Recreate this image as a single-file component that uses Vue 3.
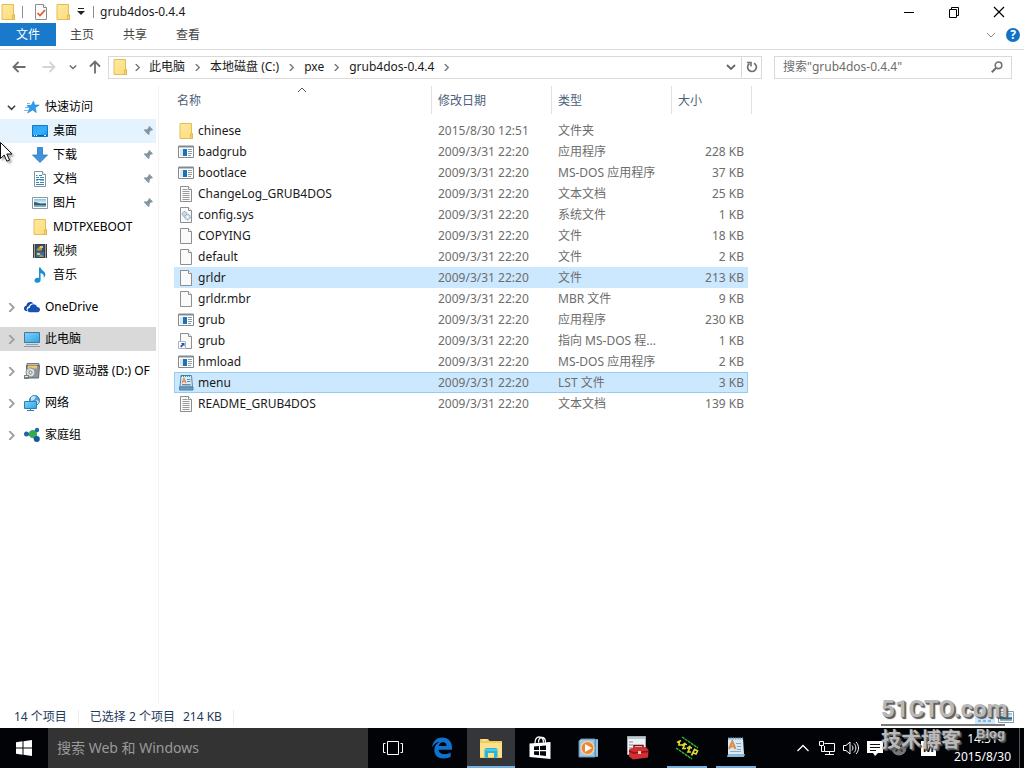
<script setup>
import { ref } from 'vue'

const crumbs = ['此电脑', '本地磁盘 (C:)', 'pxe', 'grub4dos-0.4.4']
const tabs = ['主页', '共享', '查看']
const query = ref('')
const webQuery = ref('')

const quickItems = [
  { name: '桌面', icon: 'desktop', pinned: true, hover: true },
  { name: '下载', icon: 'download', pinned: true },
  { name: '文档', icon: 'document', pinned: true },
  { name: '图片', icon: 'picture', pinned: true },
  { name: 'MDTPXEBOOT', icon: 'folder' },
  { name: '视频', icon: 'video' },
  { name: '音乐', icon: 'music' }
]
const roots = [
  { name: 'OneDrive', icon: 'onedrive' },
  { name: '此电脑', icon: 'pc', current: true },
  { name: 'DVD 驱动器 (D:) OF', icon: 'dvd' },
  { name: '网络', icon: 'network' },
  { name: '家庭组', icon: 'homegroup' }
]

const stamp = '2009/3/31 22:20'
const files = [
  { name: 'chinese', icon: 'folder', date: '2015/8/30 12:51', type: '文件夹', size: '' },
  { name: 'badgrub', icon: 'app', date: stamp, type: '应用程序', size: '228 KB' },
  { name: 'bootlace', icon: 'app', date: stamp, type: 'MS-DOS 应用程序', size: '37 KB' },
  { name: 'ChangeLog_GRUB4DOS', icon: 'text', date: stamp, type: '文本文档', size: '25 KB' },
  { name: 'config.sys', icon: 'sys', date: stamp, type: '系统文件', size: '1 KB' },
  { name: 'COPYING', icon: 'file', date: stamp, type: '文件', size: '18 KB' },
  { name: 'default', icon: 'file', date: stamp, type: '文件', size: '2 KB' },
  { name: 'grldr', icon: 'file', date: stamp, type: '文件', size: '213 KB', selected: true },
  { name: 'grldr.mbr', icon: 'file', date: stamp, type: 'MBR 文件', size: '9 KB' },
  { name: 'grub', icon: 'app', date: stamp, type: '应用程序', size: '230 KB' },
  { name: 'grub', icon: 'link', date: stamp, type: '指向 MS-DOS 程...', size: '1 KB' },
  { name: 'hmload', icon: 'app', date: stamp, type: 'MS-DOS 应用程序', size: '2 KB' },
  { name: 'menu', icon: 'wordpad', date: stamp, type: 'LST 文件', size: '3 KB', selected: true, focused: true },
  { name: 'README_GRUB4DOS', icon: 'text', date: stamp, type: '文本文档', size: '139 KB' }
]

const apps = [
  { label: '任务视图', icon: 'taskview' },
  { label: 'Microsoft Edge', icon: 'edge' },
  { label: '文件资源管理器', icon: 'explorer', active: true },
  { label: '应用商店', icon: 'store' },
  { label: 'Windows Media Player', icon: 'player' },
  { label: '工具箱', icon: 'toolbox' },
  { label: 'Tftpd', icon: 'tftp', running: true },
  { label: '写字板', icon: 'pad', running: true }
]
</script>

<template>
  <div class="screen">
    <svg class="sprite" aria-hidden="true">
      <defs>
        <linearGradient id="g-folder" x1="0" y1="0" x2="1" y2="1"><stop offset="0" stop-color="#ffe9a2" /><stop offset="1" stop-color="#fbdc7b" /></linearGradient>
        <linearGradient id="g-screen" x1="0" y1="0" x2="1" y2="1"><stop offset="0" stop-color="#2fa6f5" /><stop offset=".6" stop-color="#34b0fb" /><stop offset="1" stop-color="#0f8ff0" /></linearGradient>
        <linearGradient id="g-pc" x1="0" y1="0" x2="1" y2="1"><stop offset="0" stop-color="#7fd3fb" /><stop offset="1" stop-color="#2ea3e6" /></linearGradient>
        <linearGradient id="g-pic" x1="0" y1="0" x2="0" y2="1"><stop offset="0" stop-color="#7fc4ea" /><stop offset=".5" stop-color="#e9f5f8" /><stop offset=".6" stop-color="#40758a" /><stop offset="1" stop-color="#8fc3d6" /></linearGradient>
      </defs>
      <symbol id="i-folder" viewBox="0 0 16 16">
        <path d="M2 .5h11.5v10h1v5H2z" fill="url(#g-folder)" stroke="#e3bd57" stroke-width="1" />
        <path d="M12.500 15.500v-4.500h2v4.500z" fill="#f7d36c" stroke="#dcb44c" stroke-width=".8" />
      </symbol>
      <symbol id="i-file" viewBox="0 0 16 16">
        <path d="M2.500 .5h8l3 3v12h-11z" fill="#fafafa" stroke="#8e8e8e" />
        <path d="M10.500 .5v3h3" fill="#fff" stroke="#8e8e8e" />
      </symbol>
      <symbol id="i-text" viewBox="0 0 16 16">
        <use href="#i-file" /><path d="M4.500 3.500h5M4.500 5.500h7M4.500 7.500h7M4.500 9.500h7M4.500 11.500h7M4.500 13.500h7" stroke="#9a9a9a" />
      </symbol>
      <symbol id="i-sys" viewBox="0 0 16 16">
        <use href="#i-file" />
        <circle cx="6.500" cy="7" r="2.300" fill="#cfdce6" stroke="#7c8d9b" stroke-dasharray="1.200 .6" />
        <circle cx="9.500" cy="10" r="2.700" fill="#cfe2f2" stroke="#6a93b5" stroke-dasharray="1.200 .6" />
        <circle cx="9.500" cy="10" r=".9" fill="#fff" />
      </symbol>
      <symbol id="i-app" viewBox="0 0 16 16">
        <path d="M.5 2.500h15v11H.5z" fill="#fff" stroke="#848b90" />
        <path d="M.5 2.500h15" stroke="#848b90" stroke-width="2" />
        <path d="M2 5h3v7H2z" fill="#e0e7ec" /><path d="M5 5h4v7H5z" fill="#1874b8" />
        <path d="M10 5.500h4M10 7.500h4M10 9.500h4M10 11.500h3" stroke="#8e9aa3" />
      </symbol>
      <symbol id="i-link" viewBox="0 0 16 16">
        <use href="#i-file" /><path d="M.5 8.500h7v7h-7z" fill="#fff" stroke="#a9b4bd" />
        <path d="M3 10h3.500v3.500L5.300 12.300 3.500 14.500 2 13.300l2.100-2.100z" fill="#1e56a8" />
      </symbol>
      <symbol id="i-wordpad" viewBox="0 0 16 16">
        <path d="M3 .5h10.500l1 11.500H2z" fill="#d9ecf8" stroke="#4f88ae" />
        <path d="M3 1h10" stroke="#2b6896" stroke-dasharray="1 1" stroke-width="1.400" />
        <path d="M1.500 12h13.500v3H1.500z" fill="#6ba0c4" stroke="#4b82a6" />
        <path d="M4 8l2-4.500L8 8M4.700 6.500h2.600" fill="none" stroke="#e98743" stroke-width="1.200" />
        <path d="M9 4.500h3.500M9 6.500h3.500M4 9.500h8.500M4 11h9" stroke="#6d8da5" />
      </symbol>
      <symbol id="i-star" viewBox="0 0 16 16">
        <path d="M9.500 2l1 4 4.700.1-4 2.700 1.200 4.800-3.900-2.700-4.800 3.200 1.900-4.800L3 6.600l4.300-.3z" fill="#2e9df0" stroke="#1f7fce" stroke-width=".6" />
        <path d="M1 8.500h3.500M0 11.500h4M3 4.500h3" stroke="#65b5f0" stroke-width=".9" />
      </symbol>
      <symbol id="i-desktop" viewBox="0 0 16 16">
        <path d="M.5 2.500h15v11H.5z" fill="url(#g-screen)" stroke="#1179c9" />
        <path d="M1 12.500h14" stroke="#0c5ea8" /><path d="M2 12.500h1M4 12.500h1M12 12.500h2" stroke="#dff1ff" />
      </symbol>
      <symbol id="i-download" viewBox="0 0 16 16">
        <path d="M5.500 .5h5V8h5L8 15.500.5 8h5z" fill="#3d93dc" stroke="#2878c0" stroke-width=".8" />
      </symbol>
      <symbol id="i-document" viewBox="0 0 16 16">
        <path d="M2.500 .5h8l3 3v12h-11z" fill="#fff" stroke="#87929a" /><path d="M10.500 .5v3h3" fill="#fff" stroke="#87929a" />
        <path d="M4 4.500h1.500M7 4.500h3M4 6.500h3M8 6.500h4M4 8.500h8M4 11.500h3M8 11.500h4M4 13.500h8" stroke="#3586b8" />
        <path d="M8 9.500h4M4 9.500h2" stroke="#7db8d6" />
      </symbol>
      <symbol id="i-picture" viewBox="0 0 16 16">
        <path d="M.5 2.500h15v11H.5z" fill="#fff" stroke="#8c989f" /><path d="M2 4h12v8H2z" fill="url(#g-pic)" />
        <path d="M2 7c3 0 5 1.500 7 2l5-.5V10H2z" fill="#32606f" />
      </symbol>
      <symbol id="i-video" viewBox="0 0 16 16">
        <path d="M1 1h14v14H1z" fill="#3d3f44" /><path d="M4 2h8v5.500H4z" fill="#2d4f83" /><path d="M4 8.500h8V14H4z" fill="#3a6aa5" />
        <path d="M6 7.500V5l2-2 2 2v2.500z" fill="#d8902e" /><path d="M4 7.500l2-3 2 3zM7 14l2-3 3 3z" fill="#84a94a" /><path d="M8 3h3v2H8zM5 10h3v2H5z" fill="#e3c85c" />
        <path d="M2.500 1.500v14M13.500 1.500v14" stroke="#fff" stroke-dasharray="1 1" />
      </symbol>
      <symbol id="i-music" viewBox="0 0 16 16">
        <path d="M7 .5h1.600c.3 2.600 4.700 3.500 4.700 7 0 1.600-.9 2.900-1.600 3.500.6-2.500-.5-4.300-3.100-5v7.200c0 1.400-1.200 2.500-3.100 2.500-1.800 0-3-.9-3-2.300 0-1.600 1.500-2.600 3.200-2.600.5 0 .9.100 1.300.200z" fill="#1c8fd3" />
      </symbol>
      <symbol id="i-onedrive" viewBox="0 0 16 16">
        <path d="M3.300 12.300C1.300 12.300 0 11.200 0 9.500c0-1.500 1-2.500 2.400-2.700C2.500 4.500 4.300 3 6.300 3c1.500 0 2.600.7 3.300 1.700-2.300-.7-4.100.6-4.600 2.500C3.300 7.600 2.400 9 2.700 10.700c.1.600.3 1.100.6 1.600z" fill="#0f4aa8" />
        <path d="M6 13.300c-1.500 0-2.500-.9-2.500-2.200s1-2.300 2.300-2.400C6 6.600 7.500 5.300 9.500 5.300c1.800 0 3.100 1 3.500 2.600 1.800 0 3 1.100 3 2.700 0 1.500-1.100 2.700-2.600 2.700z" fill="#1553b5" />
      </symbol>
      <symbol id="i-pc" viewBox="0 0 16 16">
        <path d="M.5 1.500h15v10H.5z" fill="url(#g-pc)" stroke="#45779a" /><path d="M2 13.500h12" stroke="#7ba5c0" /><path d="M0 15.500h16" stroke="#8b98a1" />
      </symbol>
      <symbol id="i-dvd" viewBox="0 0 16 16">
        <path d="M3 .5h12v2H3z" fill="#b5bac0" stroke="#77797c" /><path d="M2.500 2.500h13l-1 12.500h-12z" fill="#8d969f" stroke="#5f666d" /><path d="M4 2.500h9v3H4z" fill="#f3c568" />
        <circle cx="6.500" cy="9.500" r="4.500" fill="#dce0e2" stroke="#888" /><path d="M6.500 9.500L3 6.500a5 5 0 013-1.500z" fill="#b7d7c0" /><circle cx="6.500" cy="9.500" r="1.500" fill="#fff" stroke="#777" />
        <path d="M0 12h5v4H0z" fill="#77827c" /><path d="M1 13.500h3" stroke="#eee" />
      </symbol>
      <symbol id="i-network" viewBox="0 0 16 16">
        <circle cx="10.500" cy="5.500" r="5" fill="#4aa5dc" stroke="#317eb0" /><path d="M7 2c2-1.500 4-1.500 5 0l-2 3-3 1zM12 5l3 1-1 3-2 0z" fill="#bee4f5" />
        <path d="M.5 6.500h12v7H.5z" fill="url(#g-pc)" stroke="#2c80b4" /><path d="M3 15.500h7M6.500 14v1" stroke="#3a7ca4" />
      </symbol>
      <symbol id="i-homegroup" viewBox="0 0 16 16">
        <path d="M3 6.500L9 7l3-5v11z" fill="#88bfe2" stroke="#4d97c7" /><circle cx="2.500" cy="7" r="2.500" fill="#2364ae" /><circle cx="9" cy="7" r="4" fill="#37ac4e" /><circle cx="13" cy="3" r="2.200" fill="#1f6aac" /><circle cx="12.800" cy="12" r="3" fill="#19559a" />
      </symbol>
      <symbol id="i-pin" viewBox="0 0 12 12">
        <path d="M7.300 1L11 4.700l-1 .8-.7-.2-1.800 1.800.1 2.200-.9.800-2.400-2.400L1 11l3.200-3.500-2.400-2.300.9-.9 2.100.1 1.900-1.800-.3-.7z" fill="#8494a0" />
      </symbol>
      <symbol id="i-chev" viewBox="0 0 8 8"><path d="M2 0l4 4-4 4" fill="none" stroke="currentColor" stroke-width="1.600" /></symbol>
      <symbol id="i-down" viewBox="0 0 10 10"><path d="M1 3l4 4 4-4" fill="none" stroke="currentColor" stroke-width="1.800" /></symbol>
      <symbol id="i-left" viewBox="0 0 14 14"><path d="M13.500 7H1.500M6.500 2l-5 5 5 5" fill="none" stroke="currentColor" stroke-width="1.800" /></symbol>
      <symbol id="i-right" viewBox="0 0 14 14"><path d="M.5 7h12M7.500 2l5 5-5 5" fill="none" stroke="currentColor" stroke-width="1.800" /></symbol>
      <symbol id="i-up" viewBox="0 0 14 14"><path d="M7 13.500V1.500M2 6.500l5-5 5 5" fill="none" stroke="currentColor" stroke-width="1.800" /></symbol>

      <symbol id="i-taskview" viewBox="0 0 24 24"><path d="M6.500 5.500h11v13h-11zM4.500 7.500h-2v9h2M19.500 7.500h2v9h-2" fill="none" stroke="#fff" /></symbol>
      <symbol id="i-edge" viewBox="0 0 24 24">
        <path d="M2 11.500C3 4.700 7.200 1.500 12.300 1.500c5.800 0 9.700 4 9.700 10v2.300H8.700c.2 3 2.600 4.400 5.800 4.400 2.400 0 4.300-.6 6.200-1.700v4.300c-1.800 1.100-4.200 1.700-7.100 1.700-5.700 0-9.300-3.300-9.300-8.500 0-3.900 2.200-6.600 5.300-8.300C5.700 6.600 3.600 8.500 2 11.500zM8.800 10h7.700c0-2.300-1.200-3.700-3.500-3.700-2.200 0-3.800 1.500-4.200 3.700z" fill="#0f72cf" />
      </symbol>
      <symbol id="i-explorer" viewBox="0 0 24 24">
        <path d="M1 3h8l1.500 2H23v17H1z" fill="#f2cb60" /><path d="M1 7h22v14H1z" fill="#fde18a" /><path d="M3 4h5" stroke="#fff3c4" />
        <path d="M5.500 21v-7c0-1.200.8-2 2-2h9c1.200 0 2 .8 2 2v7l-3.500 1.500V17H9v5.500z" fill="#28b5dc" /><path d="M6 14h12" stroke="#6fd7ee" />
      </symbol>
      <symbol id="i-store" viewBox="0 0 24 24">
        <path d="M7 7.500C7 3 8.500 1 11 1s4.500 2 4.500 5.500M10.500 6.500C10.500 3 12 1.500 14 1.500c2.200 0 3.500 2 3.500 5" fill="none" stroke="#fff" stroke-width="1.300" />
        <path d="M1.500 7.500L22.500 6v17l-21-2z" fill="#fff" /><path d="M6 10.500l5-.4v4H6zM12 10l6-.5v4.600h-6zM6 15.200h5v4l-5-.5zM12 15.200h6v4.700l-6-.6z" fill="#05070a" />
      </symbol>
      <symbol id="i-player" viewBox="0 0 24 24">
        <path d="M6 3h15v18H6z" fill="#5a9fc9" /><path d="M4 3h14v18H2V5z" fill="#9cc9e4" stroke="#5c8fae" /><path d="M20 4v16" stroke="#c8e3f2" />
        <circle cx="10.500" cy="12" r="6.500" fill="#ed8730" stroke="#f9d5b0" stroke-width="1.200" /><path d="M8 8l7 4-7 4z" fill="#fff" />
      </symbol>
      <symbol id="i-toolbox" viewBox="0 0 24 24">
        <path d="M1.500 .5h18v18h-18z" fill="#f0f3f5" stroke="#a0adb6" /><path d="M2 1h17v2H2z" fill="#bbc8d0" /><path d="M3 6h4M3 9h4M3 12h3" stroke="#7b8b96" />
        <path d="M8 12V9.500h9V12" fill="none" stroke="#6b1517" stroke-width="1.500" /><path d="M3 13.500L8 11h12l2.500 3-.5 7.500L7 23.500l-4-3z" fill="#d12f31" /><path d="M3 15l5 2 14-1.500" stroke="#8c1519" stroke-width="1.500" fill="none" /><path d="M12 15h3v3h-3z" fill="#f3c5be" />
      </symbol>
      <symbol id="i-tftp" viewBox="0 0 24 24">
        <path d="M7 1l16 11M1 12l16 11" stroke="#24bb37" stroke-width="1.400" stroke-dasharray="3 .6" />
        <path d="M2 6.500l4-2M4.500 5l-.5 4h3M7 9.500l3.500-2.500M9 8l3 .5M9.500 8.500l-1.500 4h3M12 12.500l3.500-2.500M14 11l3 1M15 11.500l-2 4.500h3M16.500 19.500l3-6 3 1.500-1.500 3-3-1" fill="none" stroke="#ddd832" stroke-width="1.700" />
      </symbol>
      <symbol id="i-pad" viewBox="0 0 24 24">
        <path d="M4 2h15l1 16H4z" fill="#d5e9f6" /><path d="M4 2.500h15" stroke="#77a9cc" stroke-width="2" stroke-dasharray="1.500 .8" /><path d="M4 18h17l-1 3H3z" fill="#8fb6d2" />
        <path d="M5 13l3.300-7.500L11.500 13M6.300 10.500h4" fill="none" stroke="#e28a49" stroke-width="2" /><path d="M12 7.500h5M13 10.500h4M13 13.500h4M6 15.500h11" stroke="#8ea8bb" />
      </symbol>
    </svg>

    <main class="window">
      <header class="titlebar">
        <svg class="ic16"><use href="#i-folder" /></svg>
        <i class="vsep"></i>
        <svg class="ic16" viewBox="0 0 16 16"><use href="#i-file" /><path d="M4.500 9l2.500 2.500L12 6" fill="none" stroke="#e2582f" stroke-width="1.700" /></svg>
        <svg class="ic16"><use href="#i-folder" /></svg>
        <button class="plain quick-caret" aria-label="自定义快速访问工具栏"><svg class="ic8" viewBox="0 0 8 8"><path d="M1 .5h6" stroke="#222" /><path d="M0 3h8L4 7z" fill="#222" /></svg></button>
        <i class="vsep"></i>
        <h1 class="title">grub4dos-0.4.4</h1>
        <div class="wincontrols">
          <button class="plain" aria-label="最小化"><svg viewBox="0 0 12 12"><path d="M1 6.500h10" stroke="#000" /></svg></button>
          <button class="plain" aria-label="还原"><svg viewBox="0 0 12 12"><path d="M1.500 3.500h7v8h-7zM3.500 3V1.500h7v8H9" fill="none" stroke="#000" /></svg></button>
          <button class="plain" aria-label="关闭"><svg viewBox="0 0 12 12"><path d="M1 1l10 10M11 1L1 11" stroke="#000" stroke-width="1.200" /></svg></button>
        </div>
      </header>

      <nav class="ribbon">
        <button class="tab file-tab">文件</button>
        <button v-for="t in tabs" :key="t" class="tab">{{ t }}</button>
        <button class="plain expand" aria-label="展开功能区"><svg class="ic10" viewBox="0 0 10 10"><path d="M1 3l4 4 4-4" fill="none" stroke="#8a8a8a" /></svg></button>
        <button class="help" aria-label="帮助">?</button>
      </nav>

      <div class="navrow">
        <button class="plain nav-btn" aria-label="后退"><svg class="ic14"><use href="#i-left" /></svg></button>
        <button class="plain nav-btn off" aria-label="前进"><svg class="ic14"><use href="#i-right" /></svg></button>
        <button class="plain nav-btn small" aria-label="最近位置"><svg class="ic8"><use href="#i-down" /></svg></button>
        <button class="plain nav-btn" aria-label="上移"><svg class="ic14"><use href="#i-up" /></svg></button>
        <div class="address">
          <svg class="ic16"><use href="#i-folder" /></svg>
          <svg class="sep lead"><use href="#i-chev" /></svg>
          <template v-for="c in crumbs" :key="c">
            <a href="#" class="crumb">{{ c }}</a>
            <svg class="sep"><use href="#i-chev" /></svg>
          </template>
          <button class="plain drop" aria-label="以前的位置"><svg class="ic10"><use href="#i-down" /></svg></button>
          <button class="plain refresh" aria-label="刷新"><svg class="ic12" viewBox="0 0 12 12"><path d="M8 2.200A4.400 4.400 0 1 1 3.500 2.500" fill="none" stroke="#707070" stroke-width="1.700" /><path d="M1 1.500h4v4" fill="none" stroke="#707070" stroke-width="1.600" /></svg></button>
        </div>
        <label class="searchbox">
          <input v-model="query" type="text" placeholder='搜索"grub4dos-0.4.4"' aria-label="搜索" />
          <svg class="ic12" viewBox="0 0 12 12"><circle cx="7.500" cy="4.300" r="3.300" fill="none" stroke="#707070" stroke-width="1.600" /><path d="M5 7L.8 11.200" stroke="#707070" stroke-width="2" /></svg>
        </label>
      </div>

      <div class="body">
        <aside class="tree">
          <section>
            <a href="#" class="node"><svg class="twist open"><use href="#i-down" /></svg><svg class="ic16"><use href="#i-star" /></svg><span>快速访问</span></a>
            <a v-for="q in quickItems" :key="q.name" href="#" class="node child" :class="{ hover: q.hover }">
              <svg class="ic16"><use :href="'#i-' + q.icon" /></svg><span>{{ q.name }}</span>
              <svg v-if="q.pinned" class="pin"><use href="#i-pin" /></svg>
            </a>
          </section>
          <a v-for="r in roots" :key="r.name" href="#" class="node" :class="{ current: r.current }">
            <svg class="twist"><use href="#i-chev" /></svg><svg class="ic16"><use :href="'#i-' + r.icon" /></svg><span>{{ r.name }}</span>
          </a>
        </aside>

        <section class="listing">
          <table>
            <colgroup><col class="c-name" /><col class="c-mid" /><col class="c-mid" /><col class="c-size" /><col class="c-end" /></colgroup>
            <thead>
              <tr>
                <th class="first"><div>名称<svg class="sort" viewBox="0 0 10 6"><path d="M1 5l4-4 4 4" fill="none" stroke="#5b5b5b" /></svg></div></th>
                <th><div>修改日期</div></th>
                <th><div>类型</div></th>
                <th colspan="2"><div>大小</div></th>
              </tr>
            </thead>
            <tbody>
              <tr v-for="(f, i) in files" :key="i" :class="{ selected: f.selected, focused: f.focused }">
                <td><span class="fname"><svg class="ic16"><use :href="'#i-' + f.icon" /></svg>{{ f.name }}</span></td>
                <td class="meta">{{ f.date }}</td>
                <td class="meta">{{ f.type }}</td>
                <td class="meta size">{{ f.size }}</td>
              </tr>
            </tbody>
          </table>
        </section>
      </div>

      <footer class="status">
        <span>14 个项目</span><i></i><span>已选择 2 个项目</span><span class="total">214 KB</span><i></i>
        <div class="modes">
          <button class="plain on" aria-label="详细信息"><svg class="ic16" viewBox="0 0 16 16"><path d="M1 4h3M6 4h3M11 4h3M1 8h3M6 8h3M11 8h3M1 12h3M6 12h3M11 12h3" stroke="#567d93" /></svg></button>
          <button class="plain" aria-label="大图标"><svg class="ic16"><use href="#i-picture" /></svg></button>
        </div>
      </footer>
    </main>

    <footer class="taskbar">
      <button class="plain start" aria-label="开始"><svg class="ic16" viewBox="0 0 16 16"><path d="M0 2.300L6.500 1.300v6.200H0zM7.500 1.200L16 0v7.500H7.500zM0 8.500h6.500v6.200L0 13.700zM7.500 8.500H16V16l-8.500-1.200z" fill="#fff" /></svg></button>
      <input v-model="webQuery" class="websearch" type="text" placeholder="搜索 Web 和 Windows" aria-label="搜索 Web 和 Windows" />
      <div class="apps">
        <button v-for="a in apps" :key="a.icon" class="plain app" :class="{ active: a.active, running: a.running }" :aria-label="a.label"><svg class="ic24"><use :href="'#i-' + a.icon" /></svg></button>
      </div>
      <div class="tray">
        <button class="plain" aria-label="显示隐藏的图标"><svg class="ic16" viewBox="0 0 16 16"><path d="M2.500 11L8 5.500 13.500 11" fill="none" stroke="#fff" stroke-width="1.300" /></svg></button>
        <button class="plain" aria-label="网络"><svg class="ic16" viewBox="0 0 16 16"><path d="M5.500 3.500h10v8h-10V6M6 14.500h9M10.500 12v2M.5 1.500h4v4h-4zM2.500 6v5.500h3" fill="none" stroke="#fff" /></svg></button>
        <button class="plain" aria-label="音量"><svg class="ic16" viewBox="0 0 16 16"><path d="M.5 5.500H3l4-3.500v12l-4-3.500H.5zM9 5.500c1.300 1.500 1.300 3.500 0 5M11 3.500c2.500 2.500 2.500 6.500 0 9M13 2c3.300 3.400 3.300 8.600 0 12" fill="none" stroke="#fff" /></svg></button>
        <button class="plain" aria-label="通知"><svg class="ic16" viewBox="0 0 16 16"><path d="M0 1h16v12h-5l-3 3-2-3H0z" fill="#fff" /><path d="M3 4.500h10M3 7.500h10M3 10.500h6" stroke="#111" /></svg></button>
        <button class="plain" aria-label="语言栏"><svg class="ic16" viewBox="0 0 16 16"><circle cx="8" cy="8" r="7.500" fill="#777" /><path d="M4.500 4.500l7 7M11.500 4.500l-7 7" stroke="#222" stroke-width="1.500" /></svg></button>
        <button class="plain ime" aria-label="输入法">M</button>
        <button class="plain clock"><span>14:51</span><span>2015/8/30</span></button>
        <i class="peek"></i>
      </div>
    </footer>

    <div class="watermark">
      <strong>51CTO.com</strong>
      <div><b>技术博客</b><em>Blog</em></div>
    </div>

    <svg class="pointer" viewBox="0 0 13 21"><path d="M.5 .5v16l3.700-3.500 2.600 6.200 2.700-1.200-2.700-6h5.200z" fill="#fff" stroke="#111" /></svg>
  </div>
</template>

<style>
html, body { margin: 0; background: #fff; }
</style>

<style scoped>
.screen {
  position: relative; display: flex; flex-direction: column; height: 100vh; overflow: hidden;
  font: 12px/16px "Noto Sans", "Noto Sans CJK SC", sans-serif; color: #1a1a1a; background: #fff;
}
.screen *, .screen { box-sizing: border-box; }
button, input { font: inherit; color: inherit; }
a { color: inherit; text-decoration: none; }
svg { display: block; flex: none; overflow: visible; }
.sprite { position: absolute; width: 0; height: 0; }
.ic8 { width: 8px; height: 8px; }
.ic10 { width: 10px; height: 10px; }
.ic12 { width: 12px; height: 12px; }
.ic14 { width: 14px; height: 14px; }
.ic16 { width: 16px; height: 16px; }
.ic24 { width: 24px; height: 24px; }
.plain { display: flex; align-items: center; justify-content: center; padding: 0; border: 0; background: none; }
.window { flex: 1; min-height: 0; display: flex; flex-direction: column; }

.titlebar { display: flex; align-items: center; height: 23px; gap: 6px; }
.vsep { width: 1px; height: 12px; background: #8c8c8c; }
.titlebar .vsep + .ic16 { margin-left: 4px; }
.quick-caret { width: 8px; margin-right: 2px; }
.title { margin: 0; font-size: 12px; font-weight: 400; }
.wincontrols { display: flex; margin-left: auto; padding-right: 3px; }
.wincontrols button { width: 45px; height: 20px; }
.wincontrols svg { width: 12px; height: 12px; }

.ribbon { display: flex; align-items: center; height: 27px; padding: 0 4px 3px 0; border-bottom: 1px solid #dadbdc; }
.tab { height: 23px; padding: 1px 15px 0 14px; border: 0; background: none; color: #444; }
.file-tab { padding: 0 16px; background: #1979ca; color: #fff; }
.expand { width: 20px; margin-left: auto; }
.help { width: 14px; height: 14px; margin-left: 5px; padding: 0; border: 0; border-radius: 50%; background: #1173c7; color: #fff; font-weight: 700; line-height: 14px; }

.navrow { display: flex; align-items: center; height: 36px; padding: 0 12px 2px; }
.nav-btn { width: 14px; height: 22px; margin-right: 16px; color: #6d6d6d; }
.nav-btn.off { color: #d4d4d4; margin-right: 10px; }
.nav-btn.small { margin-right: 10px; }
.nav-btn.small + .nav-btn { margin-right: 6px; margin-left: -2px; }
.address { flex: 1; display: flex; align-items: center; height: 23px; padding-left: 3px; border: 1px solid #d9d9d9; }
.sep { width: 7px; height: 7px; margin: 0 9px; color: #777; }
.sep.lead { margin: 0 8px 0 6px; }
.crumb { white-space: nowrap; }
.drop { width: 20px; height: 100%; margin-left: auto; color: #666; }
.refresh { width: 20px; height: 100%; border-left: 1px solid #d9d9d9; }
.searchbox { display: flex; align-items: center; width: 238px; height: 23px; margin-left: 12px; padding: 0 8px; border: 1px solid #d9d9d9; }
.searchbox input { flex: 1; min-width: 0; padding: 0; border: 0; outline: 0; background: none; }
.searchbox input::placeholder { color: #6d6d6d; opacity: 1; }

.body { flex: 1; min-height: 0; display: flex; }
.tree { width: 159px; padding: 9px 2px 0 0; border-right: 1px solid #f2f2f2; display: flex; flex-direction: column; gap: 8px; }
.node { display: flex; align-items: center; height: 24px; padding-left: 7px; gap: 5px; white-space: nowrap; overflow: hidden; color: #000; }
.node.child { padding-left: 32px; }
.node.hover { background: #e5f3ff; }
.node.current { background: #d9d9d9; }
.twist { width: 9px; height: 9px; margin-right: 3px; color: #a0a0a0; }
.twist.open { color: #404040; }
.pin { width: 12px; height: 12px; margin-left: auto; margin-right: 2px; }

.listing { flex: 1; min-width: 0; padding-left: 15px; overflow: hidden; }
table { width: 578px; table-layout: fixed; border-collapse: collapse; }
.c-name { width: 258px; }
.c-mid { width: 120px; }
.c-size { width: 76px; }
.c-end { width: 4px; }
th { padding: 0 0 6px; font-weight: 400; text-align: left; color: #4c607a; }
th div { position: relative; display: flex; align-items: center; height: 28px; padding: 2px 0 0 6px; border-right: 1px solid #e2e2e2; }
th.first div { padding-left: 3px; }
.sort { position: absolute; top: 1px; left: 50%; width: 10px; height: 6px; margin-left: -6px; }
td { height: 21px; padding: 0 0 0 6px; white-space: nowrap; }
td:first-child { padding-left: 4px; }
.fname { display: flex; align-items: center; gap: 4px; color: #1a1a1a; }
.meta { color: #6d6d6d; }
.size { padding: 0 4px 0 0; text-align: right; }
.selected td { background: #cce8ff; }
.focused td { box-shadow: inset 0 1px #99cbee, inset 0 -1px #99cbee; }
.focused td:first-child { box-shadow: inset 1px 1px #99cbee, inset 0 -1px #99cbee; }
.focused td:last-child { box-shadow: inset 0 1px #99cbee, inset -1px -1px #99cbee; }

.status { display: flex; align-items: center; height: 24px; padding: 2px 8px 0 14px; color: #1e395b; }
.status i { width: 1px; height: 14px; margin: 0 11px; background: #ececec; }
.total { margin-left: 8px; }
.modes { display: flex; gap: 1px; margin-left: auto; }
.modes button { width: 20px; height: 18px; }
.modes .on { background: #cce8ff; }

.taskbar { display: flex; height: 40px; background: #020307; color: #fff; }
.start { width: 48px; }
.websearch { flex: 0 1 320px; min-width: 0; padding: 0 9px; border: 0; outline: 0; background: #333; font-size: 14px; }
.websearch::placeholder { color: #9a9a9a; opacity: 1; }
.apps { display: flex; gap: 1px; padding-left: 1px; }
.app { width: 48px; position: relative; }
.app.active { background: #35363a; border-bottom: 2px solid #76b0e0; padding-top: 2px; }
.app.running { width: 40px; margin: 0 4px; border-bottom: 2px solid #76b0e0; padding-top: 2px; }
.tray { display: flex; align-items: center; gap: 8px; margin-left: auto; }
.ime { width: 15px; height: 15px; margin: 0 10px 0 6px; background: #fff; color: #111; font-weight: 700; }
.clock { flex-direction: column; line-height: 18px; }
.peek { align-self: stretch; width: 5px; border-left: 1px solid #555; }

.watermark { position: absolute; right: 19px; bottom: 14px; width: 124px; color: #b9b9b9; text-shadow: 1px 1px #666, 2px 2px 1px #555; }
.watermark strong { display: block; border-bottom: 2px solid #777; font: 700 24px/30px Roboto, sans-serif; white-space: nowrap; }
.watermark div { display: flex; justify-content: space-between; }
.watermark b { font-size: 20px; line-height: 28px; white-space: nowrap; }
.watermark em { font: 700 13px/16px "Liberation Sans", sans-serif; }
.pointer { position: absolute; left: 0; top: 142px; width: 13px; height: 21px; filter: drop-shadow(2px 2px 1px #0005); }
</style>
